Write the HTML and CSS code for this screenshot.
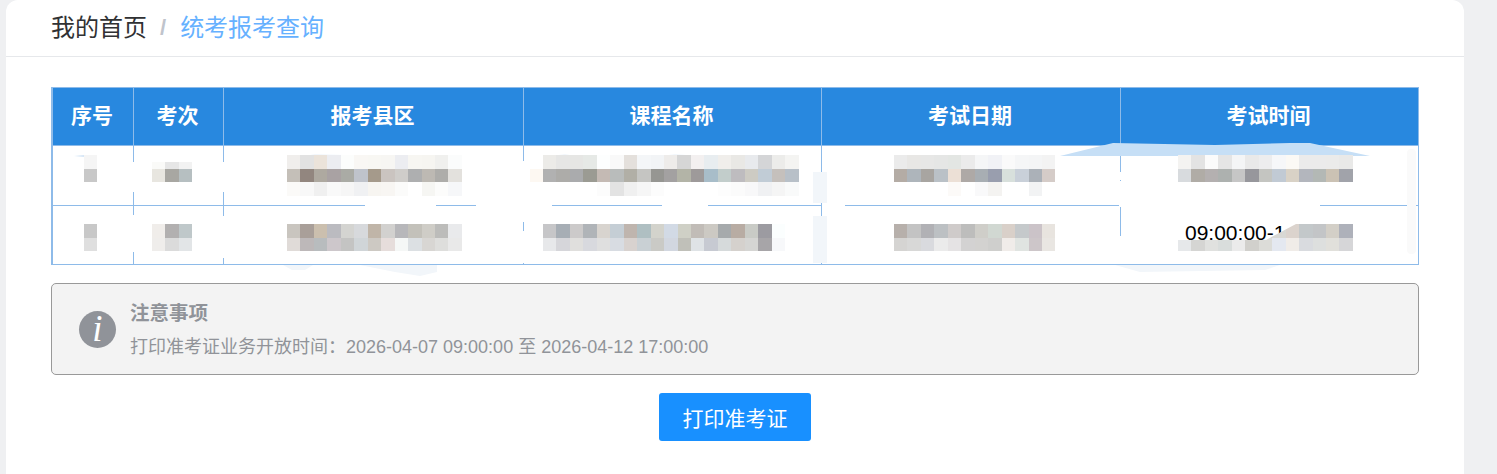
FILE: index.html
```html
<!DOCTYPE html>
<html lang="zh-CN">
<head>
  <meta charset="UTF-8">
  <title>统考报考查询</title>
  <link rel="stylesheet" href="styles.css">
</head>
<body>
  <div class="card">
    <div class="crumbs">
      <span class="crumb-home">我的首页</span>
      <span class="crumb-sep">/</span>
      <span class="crumb-now">统考报考查询</span>
    </div>

    <div class="content">
      <table class="exam-table">
        <colgroup>
          <col class="w1"><col class="w2"><col class="w3"><col class="w4"><col class="w5"><col class="w6">
        </colgroup>
        <thead>
          <tr>
            <th>序号</th>
            <th>考次</th>
            <th>报考县区</th>
            <th>课程名称</th>
            <th>考试日期</th>
            <th>考试时间</th>
          </tr>
        </thead>
        <tbody>
          <tr class="row-a">
            <td class="c1"><div class="mosaic" id="a1"></div></td>
            <td class="c2"><div class="mosaic" id="a2"></div></td>
            <td class="c3"><div class="mosaic" id="a3"></div></td>
            <td class="c4"><div class="mosaic" id="a4"></div></td>
            <td class="c5"><div class="mosaic" id="a5"></div></td>
            <td class="c6"><div class="mosaic" id="a6"></div></td>
          </tr>
          <tr class="row-b">
            <td class="c1"><div class="mosaic" id="b1"></div></td>
            <td class="c2"><div class="mosaic" id="b2"></div></td>
            <td class="c3"><div class="mosaic" id="b3"></div></td>
            <td class="c4"><div class="mosaic" id="b4"></div></td>
            <td class="c5"><div class="mosaic" id="b5"></div></td>
            <td class="c6"><div class="mosaic" id="b6"><span class="clock">09:00:00-1</span></div></td>
          </tr>
        </tbody>
      </table>

      <div class="notice">
        <div class="notice-icon">i</div>
        <div class="notice-text">
          <div class="notice-title">注意事项</div>
          <div class="notice-desc">打印准考证业务开放时间：2026-04-07 09:00:00 至 2026-04-12 17:00:00</div>
        </div>
      </div>

      <div class="actions">
        <button class="print-btn">打印准考证</button>
      </div>
    </div>

    <!-- 涂抹痕迹 -->
    <svg class="smears" width="1458" height="474" viewBox="6 0 1458 474">
      <g fill="#fff">
        <rect x="130" y="162" width="6" height="30"/>
        <rect x="220" y="162" width="6" height="30"/>
        <rect x="520" y="161" width="6" height="44"/>
        <rect x="1117" y="172" width="6" height="8"/>
        <rect x="1117" y="181" width="6" height="24"/>
        <rect x="130" y="215" width="6" height="37"/>
        <rect x="220" y="216" width="6" height="42"/>
        <rect x="520" y="206" width="6" height="16"/>
        <rect x="520" y="231" width="6" height="32"/>
        <rect x="1117" y="236" width="6" height="28"/>
        <rect x="365" y="204" width="71" height="3"/>
        <rect x="476" y="204" width="76" height="3"/>
        <rect x="662" y="204" width="46" height="3"/>
        <rect x="822" y="204" width="23" height="3"/>
        <rect x="1119" y="204" width="201" height="3"/>
      </g>
      <polygon fill="#c6dff6" points="1060,156 1113,143 1215,145 1290,143 1310,143 1370,156"/>
      <polygon fill="#d6e6f6" points="74,156 84,155 90,157 84,157"/>
      <polygon fill="#e4eef8" points="300,156 315,154.500 345,155 350,156"/>
      <polygon fill="#e4eef8" points="545,156 565,154.500 580,156"/>
      <polygon fill="#e4eef8" points="655,156 675,154.500 710,156"/>
      <g fill="#f2f6fa">
        <rect x="813" y="172" width="14" height="31"/>
        <rect x="813" y="216" width="14" height="47"/>
        <polygon points="283,265 313,265 305,270 292,270"/>
        <polygon points="360,265 437,265 437,272 420,276 395,272"/>
        <polygon points="1115,265 1280,265 1265,270 1140,272"/>
      </g>
      <rect x="1407" y="149" width="9" height="105" rx="4" fill="#fafafa"/>
    </svg>
  </div>

  <script src="mosaic.js"></script>
</body>
</html>
```

FILE: styles.css
```css
html, body {
  margin: 0;
  height: 474px;
  overflow: hidden;
}
body {
  background: #eff0f2;
  font-family: "Liberation Sans", "Noto Sans CJK SC", sans-serif;
}
.card {
  position: relative;
  width: 1458px;
  height: 474px;
  margin-left: 6px;
  background: #fff;
  border-radius: 12px 12px 0 0;
}
.crumbs {
  display: flex;
  align-items: center;
  height: 50px;
  padding: 0 0 6px 45px;
  border-bottom: 1px solid #e6e8eb;
  font-size: 24px;
}
.crumb-home {
  color: #303133;
}
.crumb-sep {
  margin: 5px 14px 0 13px;
  color: #c0c4cc;
  font-size: 22px;
  font-weight: bold;
}
.crumb-now {
  color: #66b1ff;
}
.content {
  padding: 30px 45px 0;
}

.exam-table {
  width: 1368px;
  table-layout: fixed;
  border-collapse: separate;
  border-spacing: 0;
  border-top: 1px solid #8ebbe9;
  border-left: 2px solid #8ebbe9;
}
.w1 { width: 81px; }
.w2 { width: 90px; }
.w3 { width: 300px; }
.w4 { width: 298px; }
.w5 { width: 299px; }
.w6 { width: 298px; }
.exam-table th,
.exam-table td {
  padding: 0;
  border-right: 1px solid #8ebbe9;
  border-bottom: 1px solid #8ebbe9;
}
.exam-table th {
  height: 52px;
  padding: 0 2px 5px 0;
  background: #2888df;
  color: #fff;
  font-size: 21px;
  font-weight: bold;
  text-align: center;
}
.row-a td {
  height: 59px;
}
.row-b td {
  height: 53px;
  padding-top: 5px;
}
.c1 { padding-left: 31px !important; }
.c2 { padding-left: 18px !important; }
.c3 { padding-left: 63px !important; }
.c4 { padding-left: 5.500px !important; }
.c5 { padding-left: 72px !important; }
.c6 { padding-left: 57px !important; }
.row-b .c4 { padding-left: 19px !important; }

.mosaic {
  position: relative;
  z-index: 2;
  display: grid;
  grid-auto-columns: 13.460px;
  grid-auto-rows: 13.500px;
  justify-content: start;
}
.clock {
  position: absolute;
  left: 0;
  top: 0;
  width: 111px;
  height: 16px;
  padding-left: 7px;
  overflow: hidden;
  background: #fff;
  color: #000;
  font-size: 21px;
  line-height: 18px;
  white-space: nowrap;
  clip-path: polygon(0 0, 118px 0, 88px 16px, 0 16px);
}

.notice {
  display: flex;
  align-items: center;
  gap: 14px;
  box-sizing: border-box;
  height: 92px;
  margin-top: 18px;
  padding: 2px 0 0 27px;
  background: #f3f3f3;
  border: 1px solid #999;
  border-radius: 5px;
}
.notice-icon {
  flex: none;
  width: 37px;
  height: 37px;
  margin-top: -2px;
  border-radius: 50%;
  background: #909399;
  color: #fff;
  font-family: "Liberation Serif", serif;
  font-size: 37px;
  font-style: italic;
  line-height: 36px;
  text-align: center;
}
.notice-title {
  color: #909399;
  font-size: 19.500px;
  font-weight: bold;
  line-height: 24px;
}
.notice-desc {
  margin-top: 10px;
  color: #909399;
  font-size: 18px;
  line-height: 24px;
}

.actions {
  display: flex;
  justify-content: center;
  margin-top: 18px;
}
.print-btn {
  width: 152px;
  height: 48px;
  padding: 0;
  border: 0;
  border-radius: 3px;
  background: #1890ff;
  color: #fff;
  font-family: inherit;
  font-size: 21px;
}

.smears {
  position: absolute;
  left: 0;
  top: 0;
  z-index: 1;
  pointer-events: none;
}
```

FILE: mosaic.js
```js
// 打码的色块，每个数组是一行，空串表示透明
const half = (color) => `linear-gradient(transparent 50%, ${color} 50%)`;

const blocks = {
  a1: [['#f5f5f5'], ['#c8c8c8'], ['']],
  a2: [
    [half('#fafaf8'), half('#e6e6e6'), half('#f2f2f2')],
    ['#e8e6e0', '#a8a7a2', '#b6bfc1'],
    ['', '', '']
  ],
  a3: [
    ['#f0eeec', '#e2e2e2', '#ebe3da', '#ecedf1', '#fcfdfc', '#f9f7f4', '#f8f7f3', '#f7f6f3', '#ecedf1', '#f7f6f2', '#f6f5f1', '#f0f0ee', '#fbfcfc'],
    ['#c4bfb8', '#92867f', '#aea9a0', '#a9a2a3', '#aaaba5', '#bfc3cb', '#a59a8b', '#cac4c0', '#cfcdca', '#aeafb0', '#bdb9b3', '#aeadaa', '#e3e1dd'],
    ['#fbfaf8', '#f8f8f8', '#f0f0f0', '#f9f9f9', '#f6f6f6', '#f0f1f3', '#f7f5f1', '#f8f6f3', '#fbfbfa', '', '#f6f6f3', '#fcfcfb', '#f6f7f9']
  ],
  a4: [
    ['', '#ecebe8', '#e6e6e5', '#e6e6e4', '#e6e9e6', '#fdfefe', '#f9f9f9', '#e4e0dc', '#f4f6f8', '#f2f4f6', '#eeecea', '#d6d6d6', '#f3f0f0', '#e8edf0', '#f0eeeb', '#e9e8e5', '#e8eaed', '#d4d5d7', '#ececea', '#f4f4f2'],
    ['#fdf8f2', '#b1b1b1', '#adaca9', '#aaabad', '#9b9b93', '#c4bab4', '#b9bcbb', '#b1afa6', '#c5c5c2', '#969692', '#a3a1a1', '#b3b4a7', '#9e9a9a', '#a8bdc9', '#c2cdcb', '#bebcbf', '#cdcbc3', '#c1ccd6', '#c5c0bc', '#b8c0c8'],
    ['', '', '', '', '', '#fcfcfc', '#e3e3e3', '#f0f0f0', '#f6f6f6', '#fcfcfc', '', '', '', '', '#fdfdfd', '#fbfbfb', '#f8f8f9', '#f0f1f3', '#f5f5f5', '#f9fafa']
  ],
  a5: [
    ['#ebebeb', '#e8e7e5', '#e7e7e6', '#e5e6e5', '#e3e6e3', '#ebebeb', '#f5f6f7', '#f1f2f6', '#fafafa', '#f5f6f7', '#f4f5f6', '#f3f3f3'],
    ['#b4aca5', '#aeb5bb', '#a8a5a1', '#bac1c7', '#ece0d6', '#aea9a6', '#a8aeb3', '#999eae', '#d8e0dc', '#c9d0d9', '#abb1b8', '#d5ccc8'],
    ['', '', '', '', '#fcfaf8', '', '#f9f9fa', '#f4f3f1', '', '', '#f2f3f4', '']
  ],
  a6: [
    ['#f4f3f1', '#e3e3e3', '#fbfbfb', '#e5e5e5', '#f4f5f6', '#e9e9e9', '#ededee', '#f6f7f9', '#fbf9f5', '#ebebeb', '#ebebeb', '#ebebea', '#e9e9e8'],
    ['#d8dbde', '#b0aca6', '#b4b0b0', '#adb1af', '#c6c6c6', '#97979c', '#c4c5c1', '#c1cad4', '#d9d2c6', '#b3b6bd', '#b3b8b5', '#cbc2b4', '#a1a3aa'],
    ['']
  ],
  b1: [['#c8c8c8'], ['#dfdfdf']],
  b2: [
    ['#f0edea', '#b2b0b0', '#bfc8ca'],
    ['#efedeb', '#dbdbdb', '#e2e5e7']
  ],
  b3: [
    ['#c9c5bf', '#a99f99', '#cbbfae', '#bbbbc0', '#d4d4d1', '#d7d9dc', '#c0b5a8', '#d2d1cf', '#b7b7ba', '#c3c1ba', '#cfcdc7', '#bcbcba', '#e9eaec'],
    ['#e0dbd8', '#bdb8b9', '#b8bcbe', '#cdc7cb', '#c4c4c3', '#d0d5d8', '#cdc9c3', '#e6dddb', '#f5f7f6', '#dce0e3', '#d8d6d3', '#dededc', '#e9e9e9']
  ],
  b4: [
    ['#c6c6c8', '#a7aeb5', '#cccaca', '#b0b4b8', '#d8d4cf', '#c5ced5', '#bfb5ae', '#afbfc2', '#d3d3cc', '#d2dae5', '#cfd0c6', '#c1bcb7', '#ccc9c3', '#a6aaac', '#b8aca3', '#c9cbc6', '#9c9ba1', '#fbfefe'],
    ['#e7e8ea', '#d6d6da', '#e0dfdd', '#d8d9de', '#dfdfdf', '#d8dce2', '#d8d2cf', '#c9d0d4', '#cacac6', '#d2d7e0', '#c0c0b9', '#dfe3e6', '#c7cad2', '#d6dadb', '#d5d1cd', '#d5d5d3', '#a7a5a8', '#f7f8fa']
  ],
  b5: [
    ['#b7b0ab', '#c3c3c3', '#b1b1b5', '#bcc0c3', '#cfcbca', '#bdbdbc', '#cfcec9', '#d1d8d2', '#d9d0c9', '#c5c9cb', '#cbc3c8', '#e8e4df'],
    ['#d5d4d2', '#d8d8d7', '#d9dade', '#ebebeb', '#e5e3e4', '#d3d2d2', '#d3d2d0', '#cfcfcd', '#f0ece9', '#e0e4e1', '#cdc6c9', '#e9e6e2']
  ],
  b6: [
    ['', '', '', '', '', '', '#d8d8d4', '#d8d8d4', '#dbd3cd', '#c3c8ca', '#c3c5c7', '#d3cfc7', '#aeb1ba'],
    ['#e6e8ea', '#d5d5d3', '#e0e1df', '#d9dddc', '#ebebeb', '#d1d0cc', '#dcdcd8', '#e4e8f0', '#f0ece8', '#d9dbdf', '#dddfde', '#e1e0db', '#d6d6d8']
  ]
};

Object.keys(blocks).forEach((id) => {
  const box = document.getElementById(id);
  blocks[id].forEach((row, r) => {
    row.forEach((color, c) => {
      const cell = document.createElement('span');
      cell.style.gridRow = r + 1;
      cell.style.gridColumn = c + 1;
      if (color) cell.style.background = color;
      box.insertBefore(cell, box.firstChild);
    });
  });
});
```
